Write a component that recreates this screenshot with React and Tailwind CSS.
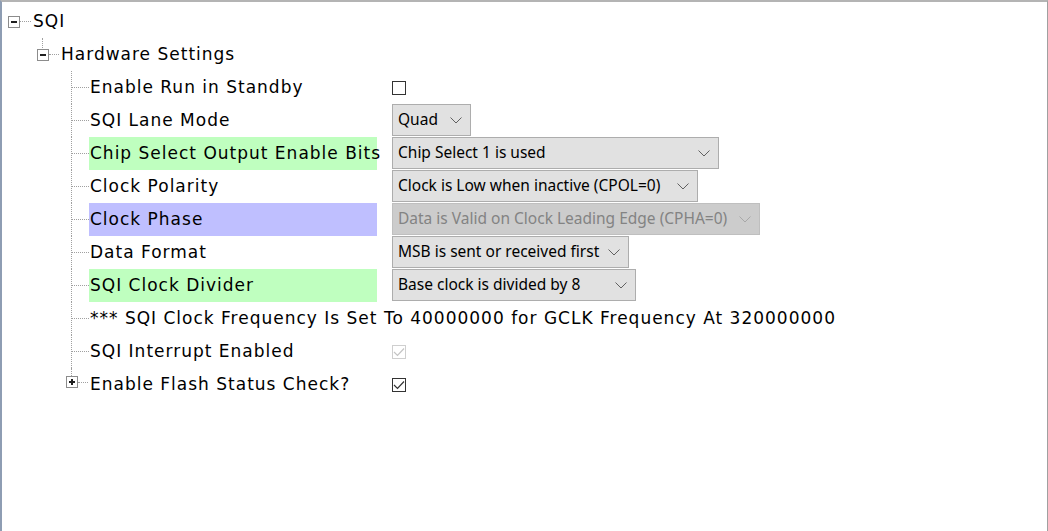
const ROWS = [
  { label: "Enable Run in Standby", kind: "check", checked: false },
  { label: "SQI Lane Mode", kind: "select", value: "Quad", w: "w-[79px]" },
  { label: "Chip Select Output Enable Bits", kind: "select", value: "Chip Select 1 is used", w: "w-[327px]", hl: "green" },
  { label: "Clock Polarity", kind: "select", value: "Clock is Low when inactive (CPOL=0)", w: "w-[306px]" },
  { label: "Clock Phase", kind: "select", value: "Data is Valid on Clock Leading Edge (CPHA=0)", w: "w-[368px]", hl: "blue", disabled: true },
  { label: "Data Format", kind: "select", value: "MSB is sent or received first", w: "w-[237px]" },
  { label: "SQI Clock Divider", kind: "select", value: "Base clock is divided by 8", w: "w-[244px]", hl: "green" },
  { label: "*** SQI Clock Frequency Is Set To 40000000 for GCLK Frequency At 320000000", kind: "text" },
  { label: "SQI Interrupt Enabled", kind: "check", checked: true, disabled: true },
  { label: "Enable Flash Status Check?", kind: "check", checked: true, expander: true, last: true },
];

function Expander({ open }) {
  return (
    <span className="relative block w-[12px] h-[12px] border border-[#8c8c8c] bg-white">
      <span className="absolute left-[2px] top-[4px] w-[6px] h-[2px] bg-[#202020]" />
      {!open && <span className="absolute left-[4px] top-[2px] w-[2px] h-[6px] bg-[#202020]" />}
    </span>
  );
}

function Chevron({ color = "#606060" }) {
  return (
    <svg width="12" height="7" viewBox="0 0 12 7" fill="none" stroke={color} strokeWidth="1">
      <polyline points="0.5 0.5 6 6 11.5 0.5" />
    </svg>
  );
}

function Checkbox({ checked, disabled }) {
  return (
    <span className={`flex items-center justify-center w-[14px] h-[14px] border bg-white ${disabled ? "border-[#cfcfcf]" : "border-[#333333]"}`}>
      {checked && (
        <svg width="12" height="10" viewBox="0 0 12 10" fill="none" stroke={disabled ? "#c4c4c4" : "#333333"} strokeWidth="1.2">
          <polyline points="1 5 4.5 8.5 11 1.5" />
        </svg>
      )}
    </span>
  );
}

function Select({ value, w, disabled }) {
  return (
    <div
      className={`flex items-center justify-between h-[32px] pl-[5px] pr-[8px] border ${w} ${
        disabled ? "bg-[#cccccc] border-[#bfbfbf] text-[#838383]" : "bg-[#e1e1e1] border-[#adadad] text-black"
      } font-['Noto_Sans',sans-serif] text-[15.5px] tracking-normal`}
    >
      <span className="whitespace-nowrap">{value}</span>
      <Chevron color={disabled ? "#a8a8a8" : "#606060"} />
    </div>
  );
}

export default function App() {
  return (
    <div className="w-[1048px] h-[531px] bg-white border-t-2 border-t-[#b4b4b4] border-l-2 border-l-[#8e9db3] border-r border-r-[#a0a0a0] pt-[3px] font-['DejaVu_Sans',sans-serif] text-[17px] tracking-[1px] text-black overflow-hidden">
      {/* SQI */}
      <div className="flex items-center h-[33px] pl-[6px]">
        <Expander open />
        <span className="w-[11px] border-t border-dotted border-[#a0a0a0]" />
        <span className="ml-[2px] pt-[1px]">SQI</span>
      </div>

      {/* Hardware Settings */}
      <div className="relative flex items-center h-[33px] pl-[35px]">
        <span className="absolute left-[40px] top-0 h-[10px] border-l border-dotted border-[#a0a0a0]" />
        <Expander open />
        <span className="w-[10px] border-t border-dotted border-[#a0a0a0]" />
        <span className="ml-[2px] pt-[1px]">Hardware Settings</span>
      </div>

      {ROWS.map((r) => (
        <div key={r.label} className="flex h-[33px]">
          <div className="relative w-[87px] shrink-0">
            <span
              className={`absolute left-[69px] top-0 border-l border-dotted border-[#a0a0a0] ${r.last ? "h-[8px]" : "h-full"}`}
            />
            {r.expander ? (
              <div className="absolute left-[64px] top-[8px] flex items-center">
                <Expander />
                <span className="w-[10px] border-t border-dotted border-[#a0a0a0]" />
              </div>
            ) : (
              <span className="absolute left-[70px] top-[16px] w-[17px] border-t border-dotted border-[#a0a0a0]" />
            )}
          </div>
          {r.kind === "text" ? (
            <div className="flex items-center pl-[1px] pt-[1px] whitespace-nowrap">{r.label}</div>
          ) : (
            <>
              <div
                className={`flex items-center w-[288px] shrink-0 pl-[1px] pt-[1px] whitespace-nowrap ${
                  r.hl === "green" ? "bg-[#bfffbf]" : r.hl === "blue" ? "bg-[#bfbfff]" : ""
                }`}
              >
                {r.label}
              </div>
              <div className="flex items-center pl-[15px]">
                {r.kind === "check" ? (
                  <Checkbox checked={r.checked} disabled={r.disabled} />
                ) : (
                  <div className="self-start">
                    <Select value={r.value} w={r.w} disabled={r.disabled} />
                  </div>
                )}
              </div>
            </>
          )}
        </div>
      ))}
    </div>
  );
}
